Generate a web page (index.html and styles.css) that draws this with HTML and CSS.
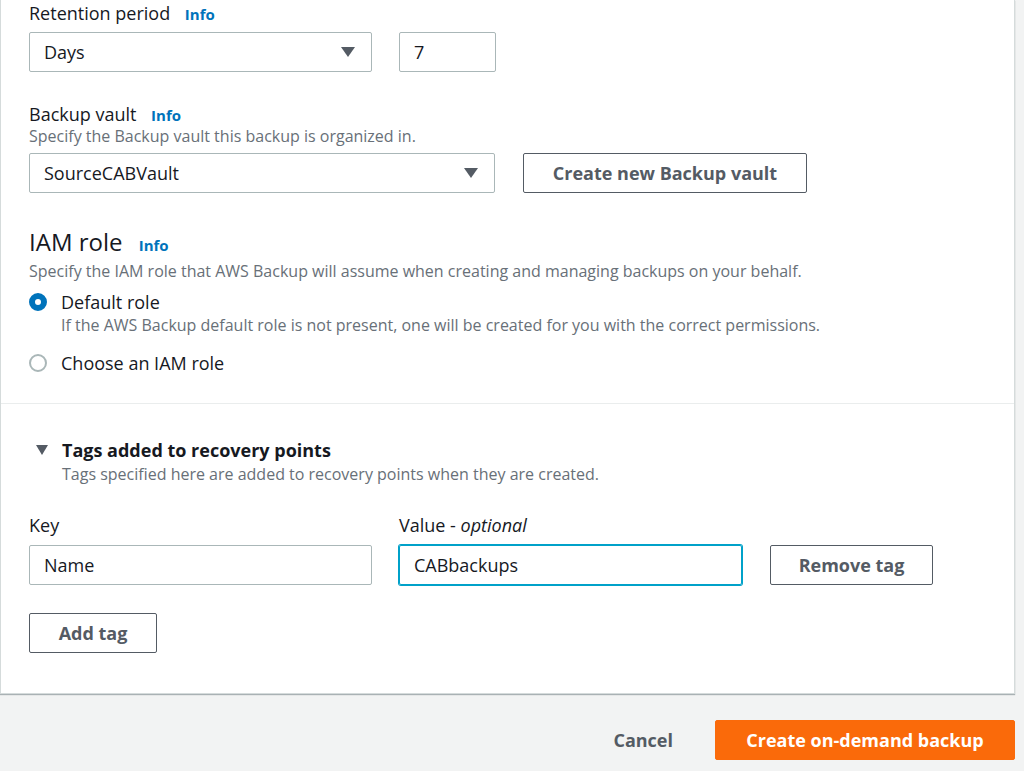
FILE: index.html
```html
<!DOCTYPE html>
<html lang="en">
<head>
    <meta charset="UTF-8">
    <meta name="viewport" content="width=device-width, initial-scale=1.0">
    <title>Create on-demand backup</title>
    <link rel="stylesheet" href="styles.css">
</head>
<body>
    <div class="card">
        <div class="section">
            <div class="label">Retention period <a class="info">Info</a></div>
            <div class="row retention-row">
                <div class="select wide">Days <span class="caret"></span></div>
                <div class="input short">7</div>
            </div>

            <div class="label vault-label">Backup vault <a class="info">Info</a></div>
            <div class="desc">Specify the Backup vault this backup is organized in.</div>
            <div class="row vault-row">
                <div class="select vault">SourceCABVault <span class="caret"></span></div>
                <button class="btn vault-btn">Create new Backup vault</button>
            </div>

            <h2 class="heading">IAM role <a class="info">Info</a></h2>
            <div class="desc">Specify the IAM role that AWS Backup will assume when creating and managing backups on your behalf.</div>
            <div class="radio-list">
                <div class="radio-item">
                    <span class="radio checked"></span>
                    <div>
                        <div class="radio-label">Default role</div>
                        <div class="desc radio-desc">If the AWS Backup default role is not present, one will be created for you with the correct permissions.</div>
                    </div>
                </div>
                <div class="radio-item second">
                    <span class="radio"></span>
                    <div class="radio-label">Choose an IAM role</div>
                </div>
            </div>
        </div>

        <div class="section tags">
            <div class="expander">
                <span class="expand-caret"></span>
                <div>
                    <div class="expander-title">Tags added to recovery points</div>
                    <div class="desc">Tags specified here are added to recovery points when they are created.</div>
                </div>
            </div>
            <div class="tag-grid">
                <div class="label">Key</div>
                <div class="label">Value - <i>optional</i></div>
                <div></div>
                <div class="input">Name</div>
                <div class="input focused">CABbackups</div>
                <button class="btn">Remove tag</button>
            </div>
            <button class="btn add-btn">Add tag</button>
        </div>
    </div>

    <div class="actions">
        <button class="link-btn">Cancel</button>
        <button class="btn primary">Create on-demand backup</button>
    </div>
</body>
</html>
```

FILE: styles.css
```css
body {
    margin: 0;
    background-color: #f2f3f3;
    font-family: 'Open Sans', 'Noto Sans', sans-serif;
    font-size: 18px;
    color: #16191f;
}
.card {
    width: 1013px;
    background-color: #ffffff;
    border: 1px solid #d5dbdb;
    border-top: none;
    box-shadow: 0 1px 1px 0 rgba(0, 28, 36, 0.3);
}
.section {
    padding: 2px 28px 29px;
}
.section.tags {
    border-top: 1px solid #eaeded;
    padding-top: 35px;
    padding-bottom: 40px;
}
.label {
    height: 22px;
    line-height: 22px;
    font-size: 18px;
    white-space: nowrap;
}
.info {
    color: #0073bb;
    font-weight: 700;
    font-size: 15px;
    line-height: 1;
    margin-left: 10px;
}
.desc {
    height: 22px;
    color: #687078;
    font-size: 16px;
    line-height: 22px;
    white-space: nowrap;
}
.row {
    display: flex;
    gap: 27px;
}
.retention-row {
    margin-top: 8px;
}
.vault-label {
    margin-top: 31px;
}
.vault-row {
    margin-top: 6px;
    gap: 28px;
}
.select, .input {
    box-sizing: border-box;
    height: 40px;
    border: 1px solid #aab7b8;
    border-radius: 2px;
    padding: 0 14px;
    display: flex;
    align-items: center;
    font-size: 18px;
}
.select {
    justify-content: space-between;
    padding-right: 16px;
}
.select.wide {
    width: 343px;
}
.input.short {
    width: 97px;
}
.select.vault {
    width: 466px;
}
.caret {
    width: 0;
    height: 0;
    border-left: 7px solid transparent;
    border-right: 7px solid transparent;
    border-top: 10px solid #545b64;
}
.btn {
    box-sizing: border-box;
    height: 40px;
    padding: 0 20px;
    background: #ffffff;
    border: 1px solid #545b64;
    border-radius: 2px;
    color: #545b64;
    font-family: inherit;
    font-size: 18px;
    font-weight: 700;
}
.vault-btn {
    width: 284px;
}
.heading {
    height: 28px;
    margin: 35px 0 4px;
    font-size: 24px;
    font-weight: 400;
    line-height: 28px;
}
.radio-list {
    margin-top: 9px;
}
.radio-item {
    display: flex;
    gap: 14px;
}
.radio-item.second {
    margin-top: 16px;
}
.radio-label {
    height: 22px;
    line-height: 22px;
}
.radio-desc {
    margin-top: 1px;
}
.radio {
    box-sizing: border-box;
    width: 18px;
    height: 18px;
    margin-top: 2px;
    border: 2px solid #aab7b8;
    border-radius: 50%;
    flex-shrink: 0;
}
.radio.checked {
    border: 6px solid #0073bb;
}
.expander {
    display: flex;
    gap: 14px;
    padding-left: 7px;
}
.expand-caret {
    width: 0;
    height: 0;
    margin-top: 6px;
    border-left: 6px solid transparent;
    border-right: 6px solid transparent;
    border-top: 10px solid #545b64;
}
.expander-title {
    height: 22px;
    font-weight: 700;
    line-height: 22px;
    margin-bottom: 2px;
}
.tag-grid {
    margin-top: 29px;
    display: grid;
    grid-template-columns: 343px 343px 164px;
    column-gap: 27px;
    row-gap: 9px;
}
.tag-grid .btn {
    margin-left: 1px;
}
.input.focused {
    border-color: #00a1c9;
    box-shadow: 0 0 0 1px #00a1c9;
}
.add-btn {
    margin-top: 28px;
    width: 128px;
}
.actions {
    width: 1015px;
    margin-top: 26px;
    display: flex;
    justify-content: flex-end;
    gap: 22px;
}
.link-btn {
    height: 40px;
    padding: 0 20px;
    background: none;
    border: none;
    color: #545b64;
    font-family: inherit;
    font-size: 18px;
    font-weight: 700;
}
.btn.primary {
    width: 300px;
    background-color: #fa6a0a;
    border-color: #fa6a0a;
    color: #ffffff;
}
```
